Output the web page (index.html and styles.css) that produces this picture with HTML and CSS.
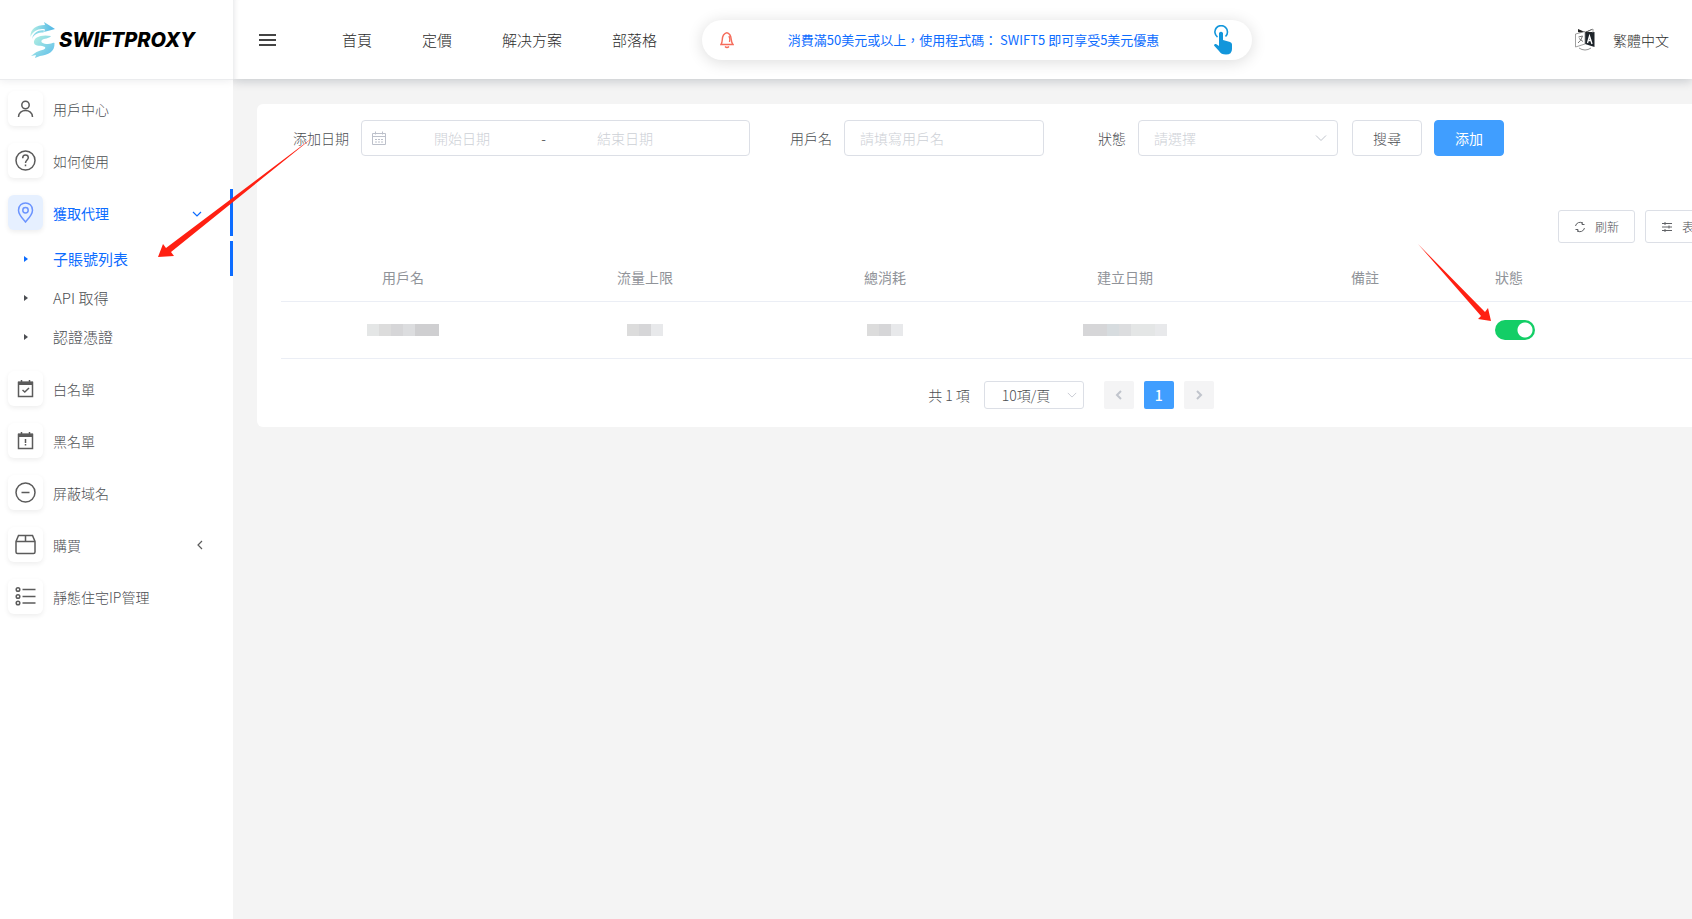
FILE: index.html
```html
<!DOCTYPE html>
<html lang="zh-Hant">
<head>
<meta charset="utf-8">
<title>SWIFTPROXY</title>
<link rel="stylesheet" href="styles.css">
</head>
<body>
<div class="app">
  <aside class="sidebar">
    <a class="logo" href="#">
      <svg class="logo-mark" width="26" height="36" viewBox="0 0 26 36" aria-hidden="true">
        <defs>
          <linearGradient id="g1" x1="0" y1="0" x2="1" y2="0"><stop offset="0" stop-color="#b5efe4"/><stop offset="1" stop-color="#4bb4e6"/></linearGradient>
          <linearGradient id="g2" x1="0" y1="0" x2="1" y2="1"><stop offset="0" stop-color="#b9f3e0"/><stop offset="1" stop-color="#5cbcec"/></linearGradient>
        </defs>
        <path d="M.5 15C0 7 6 3 15 3L14 0L25 7L14 10L15 7.500C9 6 3 9 .5 15Z" fill="url(#g1)"/>
        <path d="M2 17C3 11 9 7.500 14 8.500L13.500 10.500C8 10.500 4 12 2 17Z" fill="#8cd9e8"/>
        <path d="M21 14C12 12 3 15 4 21C5 25 12 23 15 25C17 28 9 28 5 31L1 34L6 33L5 36L10 34C18 33 25 30 24.500 21C23 20 21 22 18 22C13 22 10 20 12 18C14 16 19 17 21 14Z" fill="url(#g2)"/>
      </svg>
      <span class="logo-text">SWIFTPROXY</span>
    </a>
    <nav class="menu">
      <a class="item" href="#"><span class="tile"><svg width="21" height="21" viewBox="0 0 21 21"><circle cx="10.500" cy="7" r="3.700"/><path d="M3.500 19C3.500 10.300 17.500 10.300 17.500 19"/></svg></span><span>用戶中心</span></a>
      <a class="item" href="#"><span class="tile"><svg width="21" height="21" viewBox="0 0 21 21"><circle cx="10.500" cy="10.500" r="9.500"/><path d="M7.700 8.200C7.700 3.900 13.300 4.300 13.300 7.800C13.300 10 10.500 10 10.500 13M10.500 14.500V16.200"/></svg></span><span>如何使用</span></a>
      <a class="item active" href="#"><span class="tile"><svg width="21" height="21" viewBox="0 0 21 21"><path d="M10.500 20C7 16 3.500 12.500 3.500 8.200C3.500 -1.400 17.500 -1.400 17.500 8.200C17.500 12.500 14 16 10.500 20Z"/><circle cx="10.500" cy="8.200" r="2.700"/></svg></span><span>獲取代理</span><svg class="fold" width="10" height="10" viewBox="0 0 10 10"><path d="M1 4L5 8L9 4"/></svg></a>
      <div class="submenu">
        <a class="sub active" href="#"><svg width="4" height="6" viewBox="0 0 4 6"><path d="M0 0L4 3L0 6Z"/></svg><span>子賬號列表</span></a>
        <a class="sub" href="#"><svg width="4" height="6" viewBox="0 0 4 6"><path d="M0 0L4 3L0 6Z"/></svg><span>API 取得</span></a>
        <a class="sub" href="#"><svg width="4" height="6" viewBox="0 0 4 6"><path d="M0 0L4 3L0 6Z"/></svg><span>認證憑證</span></a>
      </div>
      <a class="item" href="#"><span class="tile"><svg width="21" height="21" viewBox="0 0 21 21"><path d="M3.500 4.500H17.500V18.500H3.500Z"/><path d="M3 3.500H18V7H3Z" class="solid"/><path d="M6.500 2V5M14.500 2V5M7.500 12L9.800 14L14 10"/></svg></span><span>白名單</span></a>
      <a class="item" href="#"><span class="tile"><svg width="21" height="21" viewBox="0 0 21 21"><path d="M3.500 4.500H17.500V18.500H3.500Z"/><path d="M3 3.500H18V7H3Z" class="solid"/><path d="M6.500 2V5M14.500 2V5M10.500 9V13M10.500 14V15.500"/></svg></span><span>黑名單</span></a>
      <a class="item" href="#"><span class="tile"><svg width="21" height="21" viewBox="0 0 21 21"><circle cx="10.500" cy="10.500" r="9.500"/><path d="M6.500 10.500H14.500"/></svg></span><span>屏蔽域名</span></a>
      <a class="item" href="#"><span class="tile"><svg width="21" height="21" viewBox="0 0 21 21"><path d="M1 7.500L3.500 1.500H17.500L20 7.500V18Q20 19.500 18.500 19.500H2.500Q1 19.500 1 18ZM1 7.500H20M10.500 1.500V7.500"/></svg></span><span>購買</span><svg class="fold" width="10" height="10" viewBox="0 0 10 10"><path d="M8 1L4 5L8 9"/></svg></a>
      <a class="item" href="#"><span class="tile"><svg width="21" height="21" viewBox="0 0 21 21"><circle cx="3" cy="3.500" r="1.800"/><circle cx="3" cy="10.500" r="1.800"/><circle cx="3" cy="17" r="1.800"/><path d="M7.500 3.500H20.500M7.500 10.500H20.500M7.500 17H20.500"/></svg></span><span>靜態住宅IP管理</span></a>
    </nav>
  </aside>

  <div class="page">
    <header class="topbar">
      <button class="burger" type="button" aria-label="選單"><svg width="17" height="12" viewBox="0 0 17 12"><path d="M0 1H17M0 6H17M0 11H17"/></svg></button>
      <nav class="nav"><a href="#">首頁</a><a href="#">定價</a><a href="#">解决方案</a><a href="#">部落格</a></nav>
      <a class="promo" href="#">
        <svg width="14" height="18" viewBox="0 0 14 18" fill="none" stroke="#f56c5b" stroke-width="1.400"><path d="M1 13.500C3 11 1.500 7 3.500 4Q7 -.5 10 4C12 7 10.500 11 13 13.500ZM5 15.500Q7 17.500 9 15.500"/><path d="M9 5Q10.500 8 9.500 11"/></svg>
        <span>消費滿50美元或以上，使用程式碼： SWIFT5 即可享受5美元優惠</span>
        <svg width="20" height="30" viewBox="0 0 20 30"><path d="M4.500 12A6.300 6.300 0 1 1 12.500 11.500" fill="none" stroke="#1296db" stroke-width="1.600"/><path d="M6 8Q8 5.500 10 8V15L17 17Q19 17.500 19 19.500V24Q19 29.500 13 29.500Q8 29.500 6 26L1 20.500Q1 18.500 3 19L6 21Z" fill="#1296db"/></svg>
      </a>
      <button class="lang" type="button">
        <svg width="20" height="23" viewBox="0 0 20 23"><path d="M3 1L10 4L17 1V5L10 6L3 4Z" fill="#222"/><path d="M10 5L19.500 4V19L10 16Z" fill="#1d2329"/><path d="M12 4L18 1V4" fill="#fff" stroke="#777" stroke-width=".7"/><path d="M.5 6L10 3.500V16L.5 19Z" fill="#fff" stroke="#888" stroke-width=".8"/><path d="M3.500 9L7.500 8Q6 13 3 15M4 10.500L8 13.500" fill="none" stroke="#777"/><path d="M12.500 15L14.500 8L17 16M13 12.500H16.500" fill="none" stroke="#fff" stroke-width="1.300"/><path d="M4 20Q10 24 16 20" fill="none" stroke="#888" stroke-width=".9"/></svg>
        <span>繁體中文</span>
      </button>
    </header>

    <main class="content">
      <section class="card">
        <form class="filters">
          <div class="field"><label for="from">添加日期</label>
            <div class="range">
              <svg width="14" height="14" viewBox="0 0 14 14" fill="none" stroke="#bcc0ca"><path d="M.5 2.500H13.500V13.500H.5ZM.5 5.500H13.500M3.500 .5V3.500M10.500 .5V3.500"/><path d="M3 8.500H11M3 11H11" stroke-dasharray="2 1"/></svg>
              <input id="from" type="text" placeholder="開始日期"><span>-</span><input type="text" placeholder="結束日期" aria-label="結束日期">
            </div>
          </div>
          <div class="field"><label for="user">用戶名</label><input class="box" id="user" type="text" placeholder="請填寫用戶名"></div>
          <div class="field"><label for="state">狀態</label>
            <div class="picker"><select class="box" id="state"><option>請選擇</option></select><svg width="12" height="12" viewBox="0 0 12 12"><path d="M1 3.500L6 8.500L11 3.500"/></svg></div>
          </div>
          <div class="actions"><button class="btn" type="button">搜尋</button><button class="btn primary" type="button">添加</button></div>
        </form>

        <div class="tools">
          <button class="tool" type="button"><svg width="12" height="12" viewBox="0 0 12 12"><path d="M10.500 7A4.700 4.700 0 0 1 3 9.700M1.500 5A4.700 4.700 0 0 1 9 2.300M1.500 8.500H4V11M10.500 3.500H8V1"/></svg>刷新</button>
          <button class="tool columns" type="button"><svg width="12" height="12" viewBox="0 0 12 12"><path d="M1 2.500H11M1 6H11M1 9.500H11M4 1V4M8 4.500V7.500M4 8V11"/></svg>表</button>
        </div>

        <table class="list">
          <colgroup><col class="c-first"><col class="c-mid"><col class="c-mid"><col class="c-mid"><col class="c-mid"><col></colgroup>
          <thead><tr><th>用戶名</th><th>流量上限</th><th>總消耗</th><th>建立日期</th><th>備註</th><th class="left">狀態</th></tr></thead>
          <tbody><tr>
            <td><span class="mask"><i class="m1"></i><i class="m2"></i><i class="m3"></i><i class="m4"></i><i class="m5"></i><i class="m5"></i></span></td>
            <td><span class="mask"><i class="m2"></i><i class="m3"></i><i class="m6"></i></span></td>
            <td><span class="mask"><i class="m2"></i><i class="m3"></i><i class="m6"></i></span></td>
            <td><span class="mask"><i class="m3"></i><i class="m3"></i><i class="m7"></i><i class="m4"></i><i class="m1"></i><i class="m1"></i><i class="m6"></i></span></td>
            <td></td>
            <td class="left"><input class="switch" type="checkbox" role="switch" checked aria-label="狀態"></td>
          </tr></tbody>
        </table>

        <div class="pager">
          <span>共 1 項</span>
          <div class="picker size"><select aria-label="每頁項數"><option>10項/頁</option></select><svg width="10" height="10" viewBox="0 0 12 12"><path d="M1 3.500L6 8.500L11 3.500"/></svg></div>
          <div class="pages">
            <button type="button" disabled aria-label="上一頁"><svg width="10" height="10" viewBox="0 0 10 10"><path d="M7 1L3 5L7 9"/></svg></button>
            <button class="current" type="button">1</button>
            <button type="button" disabled aria-label="下一頁"><svg width="10" height="10" viewBox="0 0 10 10"><path d="M3 1L7 5L3 9"/></svg></button>
          </div>
        </div>
      </section>
    </main>
  </div>
</div>
<svg class="arrow arrow-menu" width="160" height="126" viewBox="0 0 160 126" aria-hidden="true"><path d="M0 123L5 110L8 114L158 1L13 118L16 122Z"/></svg>
<svg class="arrow arrow-switch" width="76" height="80" viewBox="0 0 76 80" aria-hidden="true"><path d="M74 78L71 65L68 69L1 1L64 73L61 76Z"/></svg>
</body>
</html>
```

FILE: styles.css
```css
* { box-sizing: border-box; }

body {
  margin: 0;
  background: #f4f4f4;
  color: #4c4e52;
  font: 14px/20px "Noto Sans CJK TC", "Noto Sans", sans-serif;
  font-weight: 300;
}

button, input, select { font: inherit; color: inherit; margin: 0; }
button { cursor: pointer; }
a { color: inherit; text-decoration: none; }

.app { display: flex; min-height: 100vh; }

/* sidebar */
.sidebar {
  flex: 0 0 233px;
  background: #fff;
}

.logo {
  display: flex;
  align-items: center;
  gap: 3px;
  height: 80px;
  padding: 0 30px;
  border-bottom: 1px solid #ebecee;
  box-shadow: 0 1px 8px rgba(0, 21, 41, .08);
}

.logo-text {
  color: #000;
  font: italic 800 20px/24px Inter, sans-serif;
}

.menu { padding-top: 5px; }

.item {
  display: flex;
  align-items: center;
  height: 47px;
  margin-bottom: 5px;
  padding: 0 29px 0 8px;
  gap: 10px;
}

.item.active, .sub.active {
  color: #0c6cff;
  border-right: 3px solid #0c6cff;
  font-weight: 400;
}

.item.active { padding-right: 28px; }

.tile {
  display: grid;
  place-items: center;
  width: 35px;
  height: 35px;
  border-radius: 6px;
  background: #fff;
  box-shadow: 0 2px 5px rgba(0, 0, 0, .07);
}

.tile svg, .fold {
  fill: none;
  stroke: #5b5b5b;
  stroke-width: 1.5;
}

.tile .solid { fill: #5b5b5b; stroke: none; }
.active .tile { background: #e6f0ff; }
.active .tile svg { stroke: #6b94ff; }
.active .fold { stroke: #0c6cff; }
.fold { margin-left: auto; stroke-width: 1.2; }

.submenu { display: grid; gap: 4px; margin-bottom: 11px; }

.sub {
  display: flex;
  align-items: center;
  gap: 25px;
  height: 35px;
  padding-left: 24px;
  font-size: 15px;
}

.sub svg { fill: currentColor; }

/* header */
.page { flex: 1; min-width: 0; overflow: hidden; }

.topbar {
  display: flex;
  align-items: center;
  height: 79px;
  padding: 0 23px 0 26px;
  background: #fff;
  box-shadow: inset 6px 0 6px -6px rgba(0, 21, 41, .15), 0 2px 10px rgba(0, 21, 41, .2);
  color: #2c2c2c;
}

.burger {
  display: flex;
  padding: 0;
  border: 0;
  background: none;
}

.burger svg { stroke: #444; stroke-width: 2; }

.nav {
  display: flex;
  gap: 50px;
  margin: 0 45px 0 66px;
  font-size: 15px;
}

.promo {
  display: flex;
  align-items: center;
  justify-content: space-between;
  width: 550px;
  height: 40px;
  padding: 0 19px 0 18px;
  border-radius: 20px;
  box-shadow: 0 2px 16px rgba(0, 0, 0, .14);
  color: #0c6cff;
  font-size: 13px;
  font-weight: 400;
}

.lang {
  display: flex;
  align-items: center;
  gap: 18px;
  margin-left: auto;
  padding: 0;
  border: 0;
  background: none;
}

/* card */
.content { padding: 25px 0 0 24px; }

.card {
  min-width: 1628px;
  padding: 16px 24px 18px;
  border-radius: 6px;
  background: #fff;
}

.filters { display: flex; gap: 14px; }
.field { display: flex; align-items: center; gap: 12px; }
.field label { width: 68px; text-align: right; }

.box, .range {
  height: 36px;
  border: 1px solid #dcdfe6;
  border-radius: 4px;
  background: #fff;
}

.box { width: 200px; padding: 0 15px; }

.range {
  display: flex;
  align-items: center;
  width: 389px;
  padding: 0 10px;
  color: #303133;
}

.range input {
  width: 152px;
  padding: 0;
  border: 0;
  background: none;
  text-align: center;
}

.range span { width: 11px; text-align: center; }
::placeholder { color: #cdd0d6; opacity: 1; }

.picker { position: relative; display: flex; }
.picker select { appearance: none; color: #cdd0d6; }

.picker svg {
  position: absolute;
  right: 11px;
  top: calc(50% - 6px);
  fill: none;
  stroke: #c0c4cc;
  pointer-events: none;
}

.actions { display: flex; gap: 12px; }

.btn {
  width: 70px;
  height: 36px;
  border: 1px solid #dcdfe6;
  border-radius: 4px;
  background: #fff;
}

.btn.primary { border-color: #409eff; background: #409eff; color: #fff; font-weight: 400; }

.tools {
  display: flex;
  justify-content: flex-end;
  gap: 10px;
  padding: 54px 124px 0 0;
}

.tool {
  display: flex;
  align-items: center;
  gap: 9px;
  height: 33px;
  padding: 0 15px;
  border: 1px solid #dcdfe6;
  border-radius: 3px;
  background: #fff;
  font-size: 12px;
}

.tool.columns { width: 92px; }
.tool svg { fill: none; stroke: #606266; }

/* table */
.list {
  width: 100%;
  margin-top: 11px;
  border-collapse: collapse;
  table-layout: fixed;
}

.c-first { width: 244px; }
.c-mid { width: 240px; }

.list th {
  height: 47px;
  padding: 0 10px;
  border-bottom: 1px solid #ebeef5;
  color: #909399;
  font-weight: 400;
}

.list td {
  height: 57px;
  padding: 0 10px;
  border-bottom: 1px solid #ebeef5;
  text-align: center;
}

.list .left { text-align: left; }

.mask { display: flex; justify-content: center; }
.mask i { width: 12px; height: 12px; }
.m1 { background: #e4e6e6; }
.m2 { background: #dcdcdc; }
.m3 { background: #d6d6d8; }
.m4 { background: #dcdddf; }
.m5 { background: #cfcfd1; }
.m6 { background: #e8e9eb; }
.m7 { background: #d7dcdf; }

.switch {
  appearance: none;
  display: block;
  width: 40px;
  height: 20px;
  border-radius: 10px;
  background: radial-gradient(circle at 30px 10px, #fff 0 7px, #13ce66 8px);
}

/* pagination */
.pager {
  display: flex;
  align-items: center;
  justify-content: center;
  gap: 14px;
  padding-top: 22px;
}

.size select {
  width: 100px;
  height: 28px;
  padding: 0 17px;
  border: 1px solid #dcdfe6;
  border-radius: 3px;
  background: #fff;
  color: #4c4e52;
}

.size svg { right: 7px; top: calc(50% - 5px); }

.pages { display: flex; gap: 10px; margin-left: 6px; }

.pages button {
  display: grid;
  place-items: center;
  width: 30px;
  height: 28px;
  padding: 0;
  border: 0;
  border-radius: 2px;
  background: #f4f4f5;
}

.pages .current { background: #409eff; color: #fff; font-weight: 500; }
.pages svg { fill: none; stroke: #c0c4cc; stroke-width: 2; }

/* annotation arrows lying over the page */
.arrow { position: absolute; fill: #ff2012; pointer-events: none; }
.arrow-menu { left: 158px; top: 134px; }
.arrow-switch { left: 1417px; top: 243px; }
```
